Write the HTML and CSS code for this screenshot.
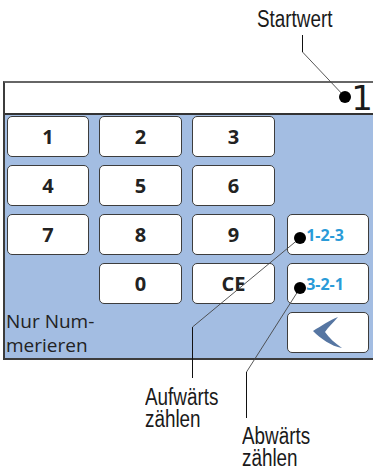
FILE: index.html
```html
<!DOCTYPE html>
<html lang="de">
<head>
    <meta charset="UTF-8">
    <title>Nummerieren</title>
    <link rel="stylesheet" href="styles.css">
</head>
<body>
<div class="sheet">
    <div class="top-note"><span class="note">Startwert</span></div>

    <div class="panel">
        <div class="display">1</div>
        <div class="keypad">
            <button class="key col-1">1</button>
            <button class="key">2</button>
            <button class="key">3</button>
            <button class="key col-1">4</button>
            <button class="key">5</button>
            <button class="key">6</button>
            <button class="key col-1">7</button>
            <button class="key">8</button>
            <button class="key">9</button>
            <button class="key key-side key-count row-3">1-2-3</button>
            <button class="key key-zero">0</button>
            <button class="key key-ce">CE</button>
            <button class="key key-side key-count row-4">3-2-1</button>
            <div class="hint">Nur Num-<br>merieren</div>
            <button class="key key-side row-5">
                <svg class="back" width="30" height="32" viewBox="0 0 30 32">
                    <path d="M0 14 C8 9 17 3 25 0 C20 6 15 10 12 15 C16 21 22 26 29 31 C18 29 8 22 0 14 Z" fill="#5676a2"/>
                </svg>
            </button>
        </div>
    </div>

    <div class="bottom-notes">
        <div class="note note-up">Aufwärts<br>zählen</div>
        <div class="note note-down">Abwärts<br>zählen</div>
    </div>

    <!-- leader lines of the callouts -->
    <svg class="leaders" width="373" height="472" viewBox="0 0 373 472">
        <g stroke="#111" stroke-width="1" fill="none">
            <path d="M302.5 35 V52"/>
            <path d="M192.5 327 V378"/>
            <path d="M246.5 372 V418"/>
        </g>
        <g stroke="#444" stroke-width="0.9" fill="none">
            <path d="M302.5 52 L345 97"/>
            <path d="M300 238 L192.5 327"/>
            <path d="M300 288 L246.5 372"/>
        </g>
        <g fill="#000">
            <circle cx="345" cy="97" r="6"/>
            <circle cx="300" cy="238" r="6"/>
            <circle cx="300" cy="288" r="6"/>
        </g>
    </svg>
</div>
</body>
</html>
```

FILE: styles.css
```css
body {
    margin: 0;
    background: #fff;
    font-family: "Open Sans", sans-serif;
}
.sheet {
    position: relative;
    width: 373px;
    height: 472px;
    overflow: hidden;
}
/* callout labels use a narrowed Liberation Sans */
.note {
    display: inline-block;
    font-family: "Liberation Sans", sans-serif;
    font-size: 23px;
    line-height: 22px;
    color: #1a1a1a;
    transform: scaleX(0.82);
    transform-origin: left top;
}
.top-note {
    height: 81px;
    box-sizing: border-box;
    padding: 8px 0 0 257px;
}
.panel {
    margin-left: 3px;
    border-top: 2px solid #666;
    border-left: 2px solid #3c3c3c;
    border-bottom: 2px solid #3c3c3c;
}
.display {
    height: 30px;
    background: #fff;
    border-bottom: 2px solid #333;
    font-family: "DejaVu Sans", sans-serif;
    font-size: 34px;
    line-height: 30px;
    text-align: right;
    color: #1a1a1a;
}
.keypad {
    background: #a3bde2;
    display: grid;
    grid-template-columns: 82px 83px 83px 84px;
    grid-template-rows: repeat(5, 41px);
    column-gap: 10px;
    row-gap: 8px;
    padding: 1px 0 5px 2px;
}
.key {
    display: flex;
    align-items: center;
    justify-content: center;
    margin: 0;
    padding: 0;
    background: #fff;
    border: 1px solid #3d3d3d;
    border-radius: 5px;
    font-family: "Open Sans", sans-serif;
    font-weight: 700;
    font-size: 20px;
    color: #222;
}
.col-1 { grid-column: 1; }
.key-side {
    grid-column: 4;
    justify-self: end;
    width: 82px;
}
.key-count {
    font-size: 16px;
    color: #2a9bd8;
    padding-right: 6px;
}
.row-3 { grid-row: 3; }
.row-4 { grid-row: 4; }
.row-5 { grid-row: 5; }
.key-zero {
    grid-column: 2;
    grid-row: 4;
}
.key-ce {
    grid-column: 3;
    grid-row: 4;
}
.hint {
    grid-column: 1 / span 2;
    grid-row: 5;
    margin: -3px 0 0 -1px;
    font-size: 19px;
    line-height: 24px;
    color: #222;
    white-space: nowrap;
}
.bottom-notes {
    display: flex;
    align-items: flex-start;
    padding: 26px 0 0 145px;
}
.note-up {
    width: 97px;
    flex: none;
}
.note-down {
    margin-top: 39px;
}
.leaders {
    position: absolute;
    top: 0;
    left: 0;
    pointer-events: none;
}
```
